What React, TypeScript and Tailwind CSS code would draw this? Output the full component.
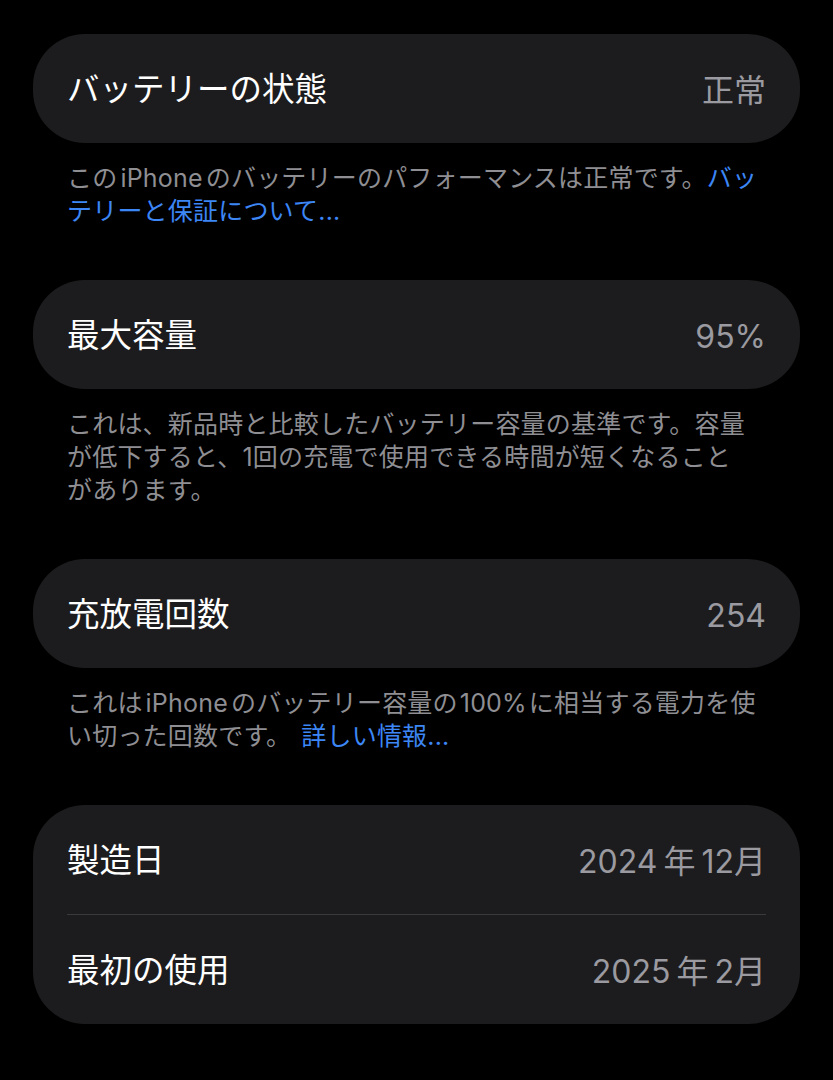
import React from 'react';

const font = { fontFamily: 'Inter, "Noto Sans CJK JP", "Noto Sans", sans-serif' };

type Row = { label: string; value: React.ReactNode };

const Card = ({ rows }: { rows: Row[] }) => (
  <div className="bg-[#1c1c1e] rounded-[52px] px-[34px]">
    {rows.map((row, i) => (
      <div key={row.label}>
        {i > 0 && <div className="h-px bg-[#3a3a3c]" />}
        <div className="h-[109px] pt-[4px] flex items-center justify-between">
          <span className="text-[32.5px] text-white leading-none">{row.label}</span>
          <span className="text-[32px] text-[#9a9aa0] leading-none">{row.value}</span>
        </div>
      </div>
    ))}
  </div>
);

const Footer = ({ children }: { children: React.ReactNode }) => (
  <p className="px-[34px] pt-[19px] text-[25px] leading-[33px] text-[#8e8e93] tracking-[0.2px]">
    {children}
  </p>
);

const Link = ({ children }: { children: React.ReactNode }) => (
  <span className="text-[#3d86f5]">{children}</span>
);

const Date = ({ y, m }: { y: string; m: string }) => (
  <>
    {y}
    <span className="px-[6px]">年</span>
    {m}月
  </>
);

export default function App() {
  return (
    <div className="min-h-screen bg-black px-[33px] pt-[34px] pb-[56px]" style={font}>
      <section className="mb-[52px]">
        <Card rows={[{ label: 'バッテリーの状態', value: '正常' }]} />
        <Footer>
          この<span className="px-[3px]">iPhone</span>のバッテリーのパフォーマンスは正常です。<Link>バッ</Link>
          <br />
          <Link>テリーと保証について...</Link>
        </Footer>
      </section>

      <section className="mb-[52px]">
        <Card rows={[{ label: '最大容量', value: '95%' }]} />
        <Footer>
          これは、新品時と比較したバッテリー容量の基準です。容量
          <br />
          が低下すると、1回の充電で使用できる時間が短くなること
          <br />
          があります。
        </Footer>
      </section>

      <section className="mb-[52px]">
        <Card rows={[{ label: '充放電回数', value: '254' }]} />
        <Footer>
          これは<span className="px-[3px]">iPhone</span>のバッテリー容量の<span className="px-[2px]">100%</span>に相当する電力を使
          <br />
          い切った回数です。<Link><span className="ml-[10px]">詳しい情報...</span></Link>
        </Footer>
      </section>

      <Card
        rows={[
          { label: '製造日', value: <Date y="2024" m="12" /> },
          { label: '最初の使用', value: <Date y="2025" m="2" /> },
        ]}
      />
    </div>
  );
}
